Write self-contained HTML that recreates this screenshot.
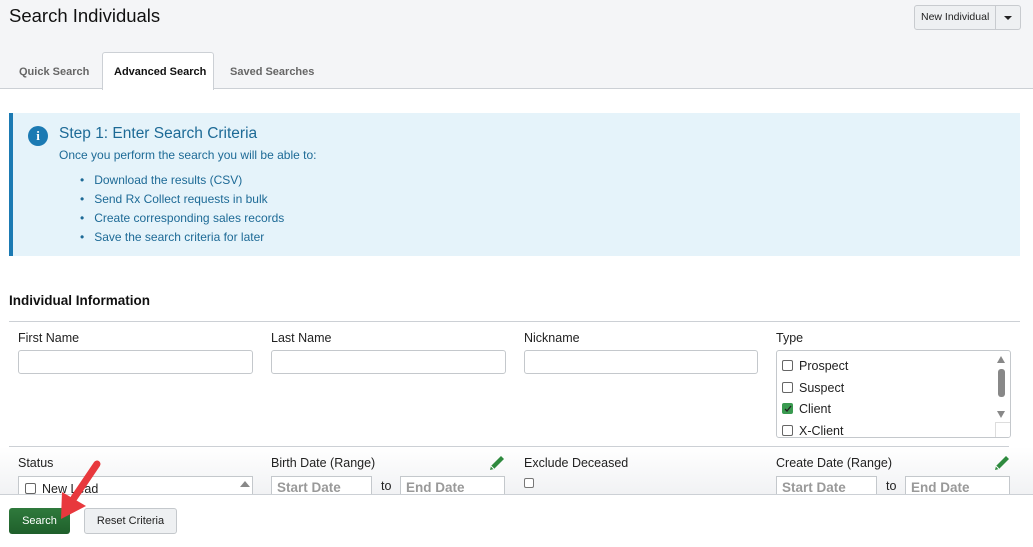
<!DOCTYPE html><html><head><style>
*{box-sizing:border-box;margin:0;padding:0}
body{width:1033px;height:547px;overflow:hidden;background:#fff;font-family:"Liberation Sans",sans-serif;position:relative;color:#222}
.a{position:absolute}
.hdr{left:0;top:0;width:1033px;height:89px;background:#f4f5f7;border-bottom:1px solid #ccd0d5}
.tab{font-size:11px;font-weight:bold;color:#666;top:66px}
.inp{position:absolute;height:24px;border:1px solid #c4c8cc;border-radius:3px;background:#fff}
.lbl{position:absolute;font-size:12.5px;color:#222}
.alert{left:9px;top:113px;width:1011px;height:143px;background:#e5f3fa;border-left:4px solid #1b7ab3;color:#1d6a96}
.cb{display:inline-block;width:11px;height:11px;border:1px solid #666;border-radius:2px;background:#fff;vertical-align:-1px;margin-right:6px;position:relative}
.di{position:absolute;height:20px;border:1px solid #c4c8cc;border-bottom:none;font-weight:bold;color:#999;font-size:13.5px;padding:3px 5px;background:#fff}
</style></head><body>
<div class="a hdr"></div>
<div class="a" style="left:9px;top:5px;font-size:18.5px;color:#111">Search Individuals</div>
<div class="a" style="left:914px;top:5px;width:107px;height:25px;border:1px solid #c8cbcf;border-radius:3px;background:#eef0f2"></div>
<div class="a" style="left:921px;top:11px;font-size:10.5px;color:#222">New Individual</div>
<div class="a" style="left:995px;top:5px;width:1px;height:25px;background:#c8cbcf"></div>
<div class="a" style="left:1004px;top:16px;border-left:4px solid transparent;border-right:4px solid transparent;border-top:4px solid #222"></div>
<div class="a" style="left:102px;top:52px;width:112px;height:38px;background:#fff;border:1px solid #ccd0d5;border-bottom:none;border-radius:3px 3px 0 0"></div>
<div class="a tab" style="left:19px">Quick Search</div>
<div class="a tab" style="left:114px;color:#111">Advanced Search</div>
<div class="a tab" style="left:230px">Saved Searches</div>
<div class="a alert"></div>
<div class="a" style="left:28px;top:126px;width:20px;height:20px;border-radius:50%;background:#1b7ab3;color:#fff;font-weight:bold;font-size:13px;text-align:center;line-height:20px;font-family:'Liberation Serif',serif">i</div>
<div class="a" style="left:59px;top:125px;font-size:15.5px;color:#1d6a96">Step 1: Enter Search Criteria</div>
<div class="a" style="left:59px;top:148px;font-size:12px;color:#1d6a96">Once you perform the search you will be able to:</div>
<div class="a" style="left:80px;top:171px;font-size:12px;color:#1d6a96;line-height:19px">
<div>•&nbsp;&nbsp;&nbsp;Download the results (CSV)</div><div>•&nbsp;&nbsp;&nbsp;Send Rx Collect requests in bulk</div><div>•&nbsp;&nbsp;&nbsp;Create corresponding sales records</div><div>•&nbsp;&nbsp;&nbsp;Save the search criteria for later</div></div>
<div class="a" style="left:9px;top:293px;font-size:13.5px;font-weight:bold;color:#111">Individual Information</div>
<div class="a" style="left:9px;top:321px;width:1011px;height:1px;background:#ccd0d5"></div>
<div class="lbl" style="left:18px;top:331px">First Name</div>
<div class="lbl" style="left:271px;top:331px">Last Name</div>
<div class="lbl" style="left:524px;top:331px">Nickname</div>
<div class="lbl" style="left:776px;top:331px">Type</div>
<div class="inp" style="left:18px;top:350px;width:235px"></div>
<div class="inp" style="left:271px;top:350px;width:235px"></div>
<div class="inp" style="left:524px;top:350px;width:234px"></div>
<div class="inp" style="left:776px;top:350px;width:235px;height:88px;overflow:hidden;font-size:12.5px;padding:5px 0 0 5px;line-height:21.5px">
<div><span class="cb"></span>Prospect</div><div><span class="cb"></span>Suspect</div><div><span class="cb" style="background:#3a9a50;border-color:#3a9a50"><svg class="a" style="left:1px;top:1px" width="8" height="8"><path d="M1 4 L3 6 L7 1" stroke="#222" stroke-width="1.3" fill="none"/></svg></span>Client</div><div><span class="cb"></span>X-Client</div>
<div class="a" style="left:221px;top:18px;width:7px;height:28px;border-radius:3px;background:#888"></div>
<div class="a" style="left:220px;top:5px;border-left:4.5px solid transparent;border-right:4.5px solid transparent;border-bottom:7px solid #888"></div>
<div class="a" style="left:220px;top:60px;border-left:4.5px solid transparent;border-right:4.5px solid transparent;border-top:7px solid #888"></div>
<div class="a" style="left:218px;top:71px;width:16px;height:16px;border-left:1px solid #ddd;border-top:1px solid #ddd;background:#fff"></div>
</div>
<div class="a" style="left:9px;top:446px;width:1000px;height:1px;background:#ccd0d5"></div>
<div class="a" style="left:0;top:447px;width:1033px;height:47px;background:linear-gradient(#fff,#f1f2f4)"></div>
<div class="lbl" style="left:18px;top:456px">Status</div>
<div class="lbl" style="left:271px;top:456px">Birth Date (Range)</div>
<div class="lbl" style="left:524px;top:456px">Exclude Deceased</div>
<div class="lbl" style="left:776px;top:456px">Create Date (Range)</div>
<svg class="a" style="left:488px;top:454px" width="18" height="18"><path d="M2 16 L3 12 L13 2 L16 5 L6 15 Z" fill="#2e8a3e"/><path d="M3 12 L6 15" stroke="#fff" stroke-width="1"/></svg>
<svg class="a" style="left:993px;top:454px" width="18" height="18"><path d="M2 16 L3 12 L13 2 L16 5 L6 15 Z" fill="#2e8a3e"/><path d="M3 12 L6 15" stroke="#fff" stroke-width="1"/></svg>
<div class="a" style="left:18px;top:476px;width:235px;height:18px;border:1px solid #c4c8cc;border-bottom:none;background:#fff;font-size:12.5px;padding:5px 0 0 6px"><span class="cb"></span>New Lead</div>
<div class="a" style="left:240px;top:481px;border-left:5px solid transparent;border-right:5px solid transparent;border-bottom:6px solid #888"></div>
<div class="di" style="left:271px;top:476px;width:101px">Start Date</div>
<div class="lbl" style="left:381px;top:479px">to</div>
<div class="di" style="left:400px;top:476px;width:105px">End Date</div>
<div class="a" style="left:524px;top:478px;width:10px;height:10px;border:1px solid #777;border-radius:2px;background:#fff"></div>
<div class="di" style="left:776px;top:476px;width:101px">Start Date</div>
<div class="lbl" style="left:886px;top:479px">to</div>
<div class="di" style="left:905px;top:476px;width:105px">End Date</div>
<div class="a" style="left:0;top:494px;width:1033px;height:53px;background:#fff;border-top:1px solid #ccd0d5"></div>
<div class="a" style="left:9px;top:508px;width:61px;height:26px;background:linear-gradient(#2f7a3c,#1f5f2b);border-radius:3px;color:#fff;font-size:11px;text-align:center;line-height:26px">Search</div>
<div class="a" style="left:84px;top:508px;width:93px;height:26px;background:#eef0f2;border:1px solid #c4c8cc;border-radius:3px;color:#222;font-size:11px;text-align:center;line-height:24px">Reset Criteria</div>
<svg class="a" style="left:40px;top:456px" width="70" height="75"><path d="M57 8 L34 42" stroke="#e8383d" stroke-width="7" stroke-linecap="round"/><path d="M21 63 L22 36 L46 50 Z" fill="#e8383d"/></svg>
</body></html>
